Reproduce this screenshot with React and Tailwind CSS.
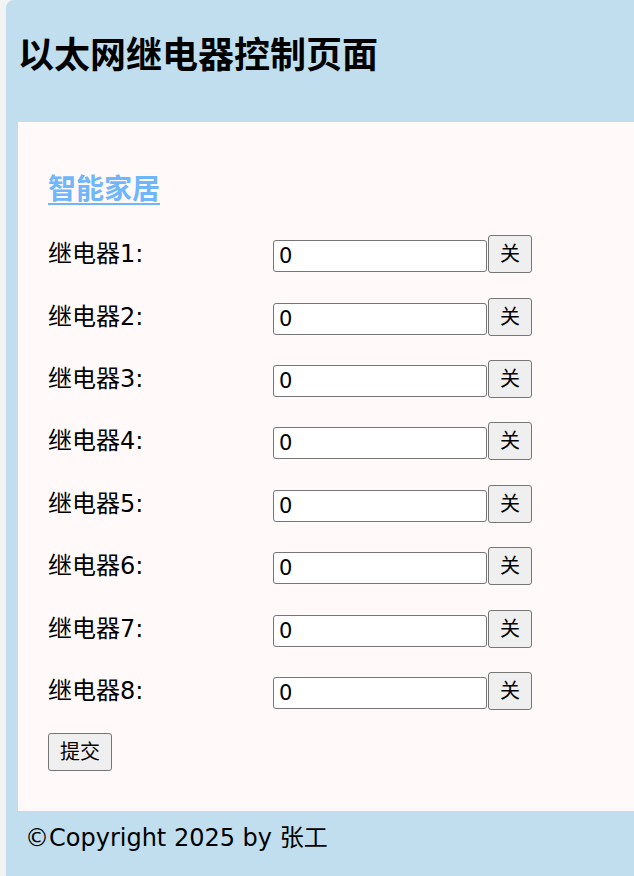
import React, { useState } from 'react';

const font = "font-['DejaVu_Sans','Noto_Sans_CJK_SC',sans-serif]";

const RelayRow = ({ index, value, onToggle }) => (
  <div className="flex items-center h-[62.4px]">
    <label className="w-[225px] text-[24px] leading-none text-black">继电器{index}:</label>
    <input
      type="text"
      readOnly
      value={value}
      className="w-[214px] h-[32px] mt-[4px] px-[5px] text-[21px] bg-white border border-[#767676] rounded-[3px] text-black outline-none"
    />
    <button
      type="button"
      onClick={onToggle}
      className="w-[44px] h-[38px] ml-px text-[20px] bg-[#efefef] border border-[#767676] rounded-[3px] text-black"
    >
      关
    </button>
  </div>
);

export default function App() {
  const [relays, setRelays] = useState([0, 0, 0, 0, 0, 0, 0, 0]);

  const toggle = (i) =>
    setRelays((r) => r.map((v, j) => (j === i ? (v ? 0 : 1) : v)));

  return (
    <div className={`${font} min-h-[876px] bg-[#f3f3f3] pl-[6px]`}>
      <div className="bg-[#c0deee] rounded-tl-[8px] min-h-[876px] flex flex-col">
        <header className="h-[122px] pl-[12px] pt-[38px]">
          <h1 className="text-[36px] font-bold leading-none text-black">以太网继电器控制页面</h1>
        </header>

        <main className="ml-[12px] bg-[#fffaf9] h-[689px] pl-[30px] pt-[54px]">
          <a href="#" className="inline-block text-[28px] leading-none text-[#70b6fa] underline underline-offset-[4px] font-bold">
            智能家居
          </a>
          <div className="mt-[17px]">
            {relays.map((v, i) => (
              <RelayRow key={i} index={i + 1} value={v} onToggle={() => toggle(i)} />
            ))}
          </div>
          <button
            type="button"
            className="mt-[11px] w-[64px] h-[38px] text-[20px] bg-[#efefef] border border-[#767676] rounded-[3px] text-black"
          >
            提交
          </button>
        </main>

        <footer className="pl-[19px] pt-[9px] text-[24px] text-black">
          ©Copyright 2025 by 张工
        </footer>
      </div>
    </div>
  );
}
